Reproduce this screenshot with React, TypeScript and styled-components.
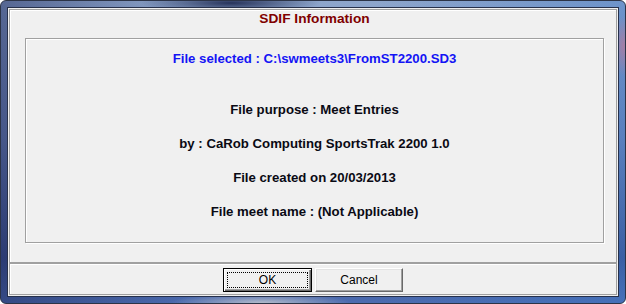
import React from "react";
import styled, { createGlobalStyle } from "styled-components";

const GlobalStyle = createGlobalStyle`
  html, body {
    margin: 0;
    padding: 0;
    background: #ffffff;
  }
  body {
    font-family: "Liberation Sans", Arial, sans-serif;
  }
`;

const lines = [
  "File purpose : Meet Entries",
  "by : CaRob Computing SportsTrak 2200 1.0",
  "File created on 20/03/2013",
  "File meet name : (Not Applicable)",
];

const SdifDialog: React.FC = () => {
  return (
    <Window>
      <Client>
        <TopPanel>
          <Title>SDIF Information</Title>
          <InfoGroup>
            <SelectedFile>File selected : C:\swmeets3\FromST2200.SD3</SelectedFile>
            <Details>
              {lines.map((line) => (
                <InfoLine key={line}>{line}</InfoLine>
              ))}
            </Details>
          </InfoGroup>
        </TopPanel>
        <ButtonBar>
          <Button $isDefault>
            <FocusRing>OK</FocusRing>
          </Button>
          <Button>Cancel</Button>
        </ButtonBar>
      </Client>
    </Window>
  );
};

export default function App() {
  return (
    <>
      <GlobalStyle />
      <SdifDialog />
    </>
  );
}

const Window = styled("div")`
  box-sizing: border-box;
  width: 626px;
  height: 304px;
  padding: 6px;
  border: 1px solid #2c3447;
  border-radius: 6px;
  background:
    radial-gradient(ellipse 90px 10px at 230px 2px, rgba(20, 30, 70, 0.85), transparent),
    radial-gradient(ellipse 12px 30px at 623px 45px, rgba(190, 120, 150, 0.7), transparent),
    radial-gradient(ellipse 90px 10px at 260px 302px, rgba(190, 195, 205, 0.9), transparent),
    linear-gradient(90deg, rgba(30, 40, 90, 0.5) 0%, transparent 30%, transparent 60%, rgba(60, 120, 200, 0.4) 100%),
    linear-gradient(180deg, #8ea6cc 0%, #6d85b8 45%, #3a4f8c 85%, #4c6cb0 100%);
`;

const Client = styled("div")`
  box-sizing: border-box;
  display: flex;
  flex-direction: column;
  height: 100%;
  padding: 1px;
  border: 1px solid #26304a;
  background: #f0f0f0;
`;

const Panel = styled("div")`
  box-sizing: border-box;
  border: 1px solid #a0a0a0;
  box-shadow: inset 1px 1px 0 #ffffff;
`;

const TopPanel = styled(Panel)`
  display: flex;
  flex-direction: column;
  height: 254px;
  padding: 0 12px 0 15px;
`;

const Title = styled("div")`
  height: 28px;
  line-height: 18px;
  text-align: center;
  font-size: 13.7px;
  font-weight: bold;
  color: #800000;
`;

const InfoGroup = styled("div")`
  box-sizing: border-box;
  display: flex;
  flex-direction: column;
  align-items: center;
  height: 205px;
  padding-top: 10px;
  border: 1px solid #a0a0a0;
  box-shadow: inset 1px 1px 0 #ffffff, 1px 1px 0 #ffffff;
  font-size: 13.2px;
  font-weight: bold;
  line-height: 20px;
`;

const SelectedFile = styled("div")`
  color: #1414f5;
`;

const Details = styled("div")`
  display: flex;
  flex-direction: column;
  align-items: center;
  gap: 14px;
  margin-top: 31px;
  color: #0a0a14;
`;

const InfoLine = styled("div")``;

const ButtonBar = styled(Panel)`
  display: flex;
  justify-content: center;
  gap: 3px;
  height: 32px;
  padding-top: 4px;
`;

const Button = styled("button")<{ $isDefault?: boolean }>`
  box-sizing: border-box;
  display: flex;
  align-items: center;
  justify-content: center;
  width: ${(p) => (p.$isDefault ? "89px" : "88px")};
  height: 24px;
  padding: ${(p) => (p.$isDefault ? "3px" : "0")};
  margin: 0;
  font-family: "Liberation Sans", Arial, sans-serif;
  font-size: 12px;
  color: #000000;
  background: #f0f0f0;
  border: 1px solid;
  border-color: ${(p) =>
    p.$isDefault ? "#000000" : "#ffffff #696969 #696969 #ffffff"};
  box-shadow: ${(p) =>
    p.$isDefault
      ? "inset 1px 1px 0 #ffffff, inset -1px -1px 0 #696969, inset -2px -2px 0 #a0a0a0"
      : "inset -1px -1px 0 #a0a0a0, inset 1px 1px 0 #e3e3e3"};
  border-radius: 0;
`;

const FocusRing = styled("span")`
  box-sizing: border-box;
  display: flex;
  align-items: center;
  justify-content: center;
  width: 100%;
  height: 100%;
  border: 1px dotted #000000;
`;
